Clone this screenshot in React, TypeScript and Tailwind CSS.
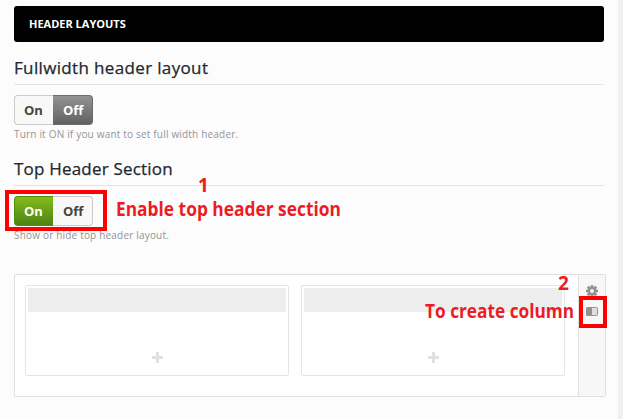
import React from "react";

function Toggle({ on }: { on: boolean }) {
  return (
    <div className="flex h-[30px] w-[79px] text-[13px] leading-[28px] font-bold">
      <div
        className={
          on
            ? "w-[39px] rounded-l-[4px] border border-r-0 border-[#568a0b] bg-linear-to-b from-[#84bd1d] to-[#4d8310] pl-[9px] text-white"
            : "w-[39px] rounded-l-[4px] border border-r-0 border-[#cccccc] bg-[#f8f8f8] pl-[9px] text-[#444444]"
        }
      >
        On
      </div>
      <div
        className={
          on
            ? "w-[40px] rounded-r-[4px] border border-l-0 border-[#cccccc] bg-[#f8f8f8] pl-[10px] text-[#444444]"
            : "w-[40px] rounded-r-[4px] border border-l-0 border-[#6c6c6c] bg-linear-to-b from-[#939393] to-[#626262] pl-[10px] text-white"
        }
      >
        Off
      </div>
    </div>
  );
}

function Option({ title, help, on }: { title: string; help: string; on: boolean }) {
  return (
    <section className="h-[101px]">
      <h2
        className={
          on
            ? "h-[32px] border-b border-[#e5e5e5] text-[17px] leading-[29px] tracking-[0.2px] whitespace-nowrap text-[#23282d] [-webkit-text-stroke:0.25px_#23282d]"
            : "h-[32px] border-b border-[#e5e5e5] text-[17px] leading-[29px] tracking-[0.35px] whitespace-nowrap text-[#23282d] [-webkit-text-stroke:0.25px_#23282d]"
        }
      >
        {title}
      </h2>
      <div className="pt-[10px]">
        <Toggle on={on} />
      </div>
      <p className="pt-[2px] text-[10px] leading-[15px] tracking-[0.19px] whitespace-nowrap text-[#949494]">{help}</p>
    </section>
  );
}

function Column() {
  return (
    <div className="flex h-[91px] w-[264px] flex-col items-center rounded-[2px] border border-[#e5e5e5] p-[2px]">
      <div className="h-[24px] w-full bg-[#ededed]" />
      <svg className="mt-[40px] ml-px h-[11px] w-[11px]" viewBox="0 0 11 11">
        <path d="M4 0h3v4h4v3H7v4H4V7H0V4h4z" fill="#e0e0e0" />
      </svg>
    </div>
  );
}

function Gear() {
  return (
    <svg className="h-[12px] w-[12px]" viewBox="0 0 12 12">
      <g fill="#929292">
        <path d="M4.8 0h2.4v12H4.8zM0 4.8h12v2.4H0z" />
        <path d="M4.6 0h2.8v12H4.6zM0 4.6h12v2.8H0z" transform="rotate(45 6 6)" />
      </g>
      <circle cx="6" cy="6" r="3.2" fill="#f7f7f7" stroke="#929292" strokeWidth="2.6" />
    </svg>
  );
}

export default function App() {
  return (
    <div className="relative h-[419px] w-[623px] overflow-hidden border-r-[5px] border-[#f0f0f0] bg-[#fcfcfc] pt-[6px] pl-[14px] font-['Open_Sans',sans-serif]">
      <header className="mb-[11px] h-[36px] w-[590px] rounded-[3px] bg-black pl-[15px] text-[11px] leading-[36px] font-bold text-white">
        HEADER LAYOUTS
      </header>
      <main className="w-[590px]">
        <Option title="Fullwidth header layout" help="Turn it ON if you want to set full width header." on={false} />
        <Option title="Top Header Section" help="Show or hide top header layout." on />
      </main>
      <div className="mt-[19px] flex h-[123px] w-[592px] rounded-[2px] border border-[#dfdfdf] bg-white">
        <div className="flex flex-1 gap-[12px] pt-[10px] pl-[10px]">
          <Column />
          <Column />
        </div>
        <aside className="flex w-[27px] flex-col items-start gap-[10px] border-l border-[#dfdfdf] bg-[#f7f7f7] pt-[10px] pl-[7px]">
          <Gear />
          <svg className="h-[9px] w-[12px]" viewBox="0 0 12 9">
            <rect x=".5" y=".5" width="11" height="8" rx="1" fill="#e0e0e0" stroke="#929292" />
            <path d="M1 0h5v9H1L0 8V1z" fill="#929292" />
          </svg>
        </aside>
      </div>

      <div className="absolute top-[190px] left-[5px] h-[41px] w-[102px] border-4 border-[#ff0000]" />
      <div className="absolute top-[296px] left-[579px] h-[32px] w-[28px] border-4 border-[#ff0000]" />
      <div className="text-[19px] leading-[20px] font-bold whitespace-nowrap text-[#ed1c24]">
        <span className="absolute top-[175px] left-[198px] block h-[20px]">1</span>
        <span className="absolute top-[199px] left-[116px] block h-[20px] origin-left scale-x-[0.913]">Enable top header section</span>
        <span className="absolute top-[273px] left-[558px] block h-[20px]">2</span>
        <span className="absolute top-[301px] left-[425px] block h-[20px] origin-left scale-x-[0.908]">To create column</span>
      </div>
    </div>
  );
}
